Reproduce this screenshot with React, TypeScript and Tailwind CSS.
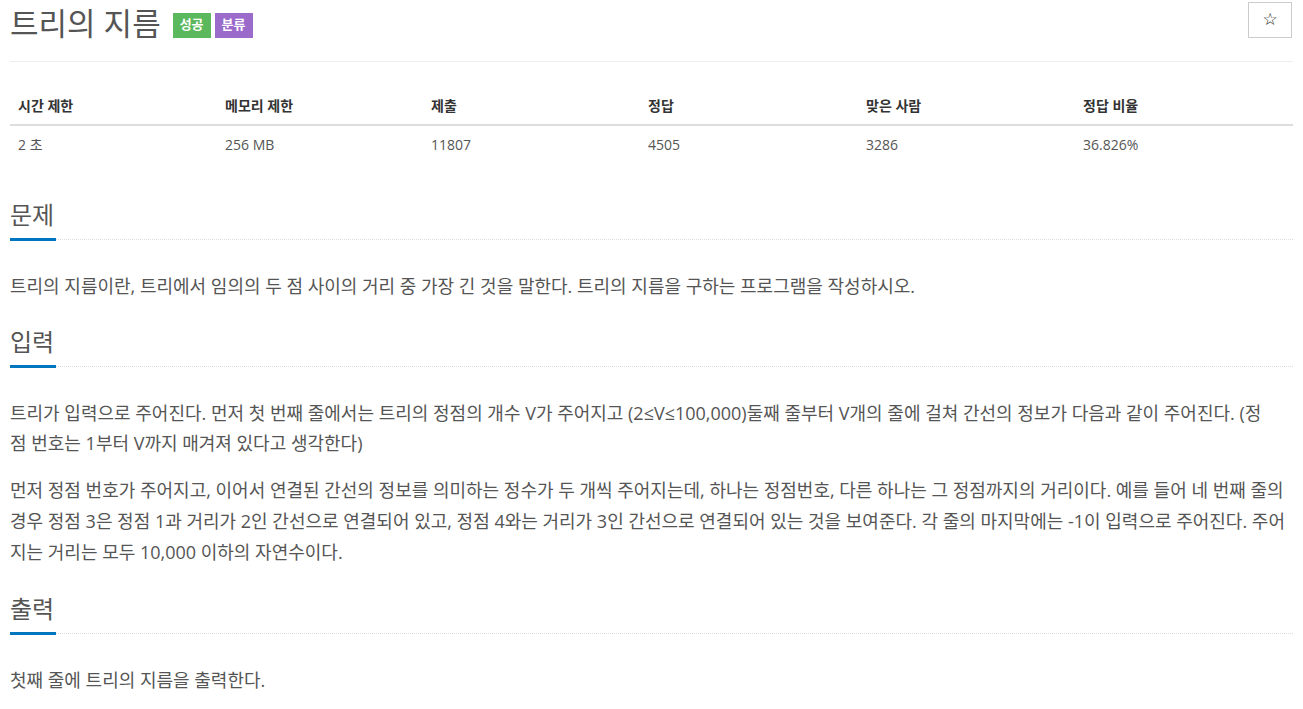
import React from 'react';

const font = { fontFamily: '"Open Sans", "Noto Sans CJK KR", sans-serif' };

const stats = [
  { label: '시간 제한', value: '2 초', w: 'w-[207px]' },
  { label: '메모리 제한', value: '256 MB', w: 'w-[206px]' },
  { label: '제출', value: '11807', w: 'w-[217px]' },
  { label: '정답', value: '4505', w: 'w-[218px]' },
  { label: '맞은 사람', value: '3286', w: 'w-[217px]' },
  { label: '정답 비율', value: '36.826%', w: '' },
];

function Headline({ title }: { title: string }) {
  return (
    <div className="flex border-b border-dotted border-[#ddd]">
      <h2 className="-mb-[2px] inline-block border-b-[3px] border-[#0076c0] pb-[6px] pr-[2px] text-[24px] leading-[34px] text-[#555]">
        {title}
      </h2>
    </div>
  );
}

export default function App() {
  return (
    <div className="min-h-screen bg-white px-[10px] text-[#555]" style={font}>
      {/* Title */}
      <div className="flex h-[62px] items-start justify-between border-b border-[#eee]">
        <div className="flex items-center pt-[3px]">
          <h1 className="text-[31px] leading-[40px] text-[#555]">트리의 지름</h1>
          <span className="ml-[12px] mt-[4px] flex h-[25px] items-center bg-[#5cb85c] px-[7px] text-[13px] font-bold text-white">
            성공
          </span>
          <span className="ml-[4px] mt-[4px] flex h-[25px] items-center bg-[#9b6bcc] px-[7px] text-[13px] font-bold text-white">
            분류
          </span>
        </div>
        <button className="mr-[1px] mt-[2px] flex h-[36px] w-[44px] items-center justify-center border border-[#ccc] bg-white text-[17px] text-[#222]" style={{ fontFamily: '"DejaVu Sans", sans-serif' }}>
          ☆
        </button>
      </div>

      {/* Stats table */}
      <table className="mt-[26px] w-full border-collapse text-[14px]">
        <thead>
          <tr className="border-b-2 border-[#ddd]">
            {stats.map((s) => (
              <th key={s.label} className={`${s.w} px-[8px] py-[8px] text-left font-bold leading-[20px] text-[#333]`}>
                {s.label}
              </th>
            ))}
          </tr>
        </thead>
        <tbody>
          <tr>
            {stats.map((s) => (
              <td key={s.label} className="px-[8px] py-[8px] leading-[22px] text-[#555]">
                {s.value}
              </td>
            ))}
          </tr>
        </tbody>
      </table>

      {/* 문제 */}
      <section className="mt-[34px]">
        <Headline title="문제" />
        <div className="mt-[31px] text-[18px] leading-[30px]">
          <p>트리의 지름이란, 트리에서 임의의 두 점 사이의 거리 중 가장 긴 것을 말한다. 트리의 지름을 구하는 프로그램을 작성하시오.</p>
        </div>
      </section>

      {/* 입력 */}
      <section className="mt-[24px]">
        <Headline title="입력" />
        <div className="mt-[31px] text-[18px] leading-[30px]">
          <p>
            트리가 입력으로 주어진다. 먼저 첫 번째 줄에서는 트리의 정점의 개수 V가 주어지고 (2≤V≤100,000)둘째 줄부터 V개의 줄에 걸쳐 간선의 정보가 다음과 같이 주어진다. (정<br />점 번호는 1부터 V까지 매겨져 있다고 생각한다)
          </p>
          <p className="mt-[17px] leading-[31px]">
            먼저 정점 번호가 주어지고, 이어서 연결된 간선의 정보를 의미하는 정수가 두 개씩 주어지는데, 하나는 정점번호, 다른 하나는 그 정점까지의 거리이다. 예를 들어 네 번째 줄의 경우 정점 3은 정점 1과 거리가 2인 간선으로 연결되어 있고, 정점 4와는 거리가 3인 간선으로 연결되어 있는 것을 보여준다. 각 줄의 마지막에는 -1이 입력으로 주어진다. 주어지는 거리는 모두 10,000 이하의 자연수이다.
          </p>
        </div>
      </section>

      {/* 출력 */}
      <section className="mt-[24px]">
        <Headline title="출력" />
        <div className="mt-[31px] text-[18px] leading-[30px]">
          <p>첫째 줄에 트리의 지름을 출력한다.</p>
        </div>
      </section>
    </div>
  );
}
